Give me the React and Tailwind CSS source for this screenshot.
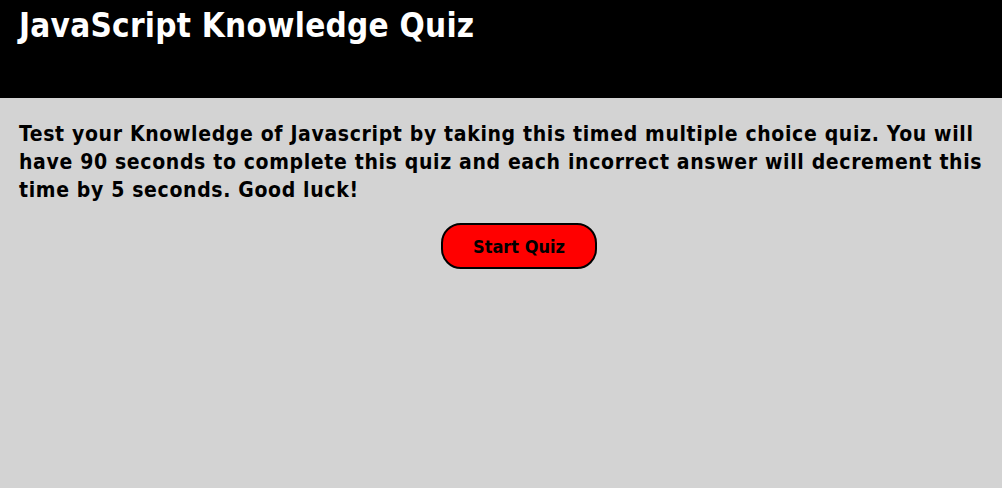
export default function App() {
  return (
    <div className="min-h-[488px] w-full bg-[#d3d3d3] font-['DejaVu_Sans_Condensed','DejaVu_Sans',sans-serif] text-black">
      <header className="h-[98px] bg-black px-[19px] pt-[4px]">
        <h1 className="text-[33px] font-bold leading-[44px] tracking-[0.25px] text-white">JavaScript Knowledge Quiz</h1>
      </header>

      <main className="px-[19px] pt-[22px]">
        <p className="text-[21px] font-bold leading-[28px] tracking-[0.65px]">
          Test your Knowledge of Javascript by taking this timed multiple choice quiz. You will have 90 seconds to
          complete this quiz and each incorrect answer will decrement this time by 5 seconds. Good luck!
        </p>
        <div className="mt-[19px] flex justify-center pl-[36px]">
          <button className="h-[46px] w-[156px] rounded-[20px] border-2 border-black bg-[#ff0000] text-[18px] font-bold text-black">
            Start Quiz
          </button>
        </div>
      </main>
    </div>
  )
}
